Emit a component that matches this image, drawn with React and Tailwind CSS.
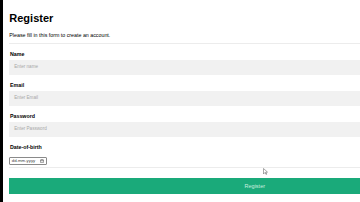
// App.jsx — scaled-down register form
const fields = [
  { label: 'Name', placeholder: 'Enter name' },
  { label: 'Email', placeholder: 'Enter Email' },
  { label: 'Password', placeholder: 'Enter Password' },
];

function Field({ label, placeholder }) {
  return (
    <div className="flex flex-col">
      <div className="h-[6px] text-[5.3px] leading-[6px] font-bold text-black pl-[0.7px]">{label}</div>
      <div className="mt-[3px] h-[14.5px] bg-[#f1f1f1] flex items-center pl-[5px] text-[4.6px] text-[#a8a8a8]">
        {placeholder}
      </div>
      <div className="h-[7.5px]" />
    </div>
  );
}

export default function App() {
  return (
    <div
      className="relative w-[360px] h-[202px] overflow-hidden bg-white flex"
      style={{ fontFamily: '"Liberation Sans", Arial, sans-serif' }}>
      {/* left edge */}
      <div className="w-[3px] shrink-0 bg-black" />

      <div className="shrink-0 w-[491px] ml-[6.3px] flex flex-col">
        <h1 className="mt-[13px] text-[11px] leading-[11px] font-bold text-black">Register</h1>
        <p className="mt-[8px] text-[5.3px] leading-[6px] text-black">Please fill in this form to create an account.</p>
        <div className="mt-[5px] h-px bg-[#ececec]" />

        <div className="mt-[7.3px] flex flex-col">
          {fields.map((f) => (
            <Field key={f.label} {...f} />
          ))}
        </div>

        <div className="h-[6px] text-[5.3px] leading-[6px] font-bold text-black pl-[0.7px]">Date-of-birth</div>
        <div className="mt-[7px] w-[37.5px] h-[7.5px] border-[0.6px] border-[#8a8a8a] rounded-[1px] flex items-center justify-between px-[1.5px] text-[4.3px] text-[#444]">
          <span>dd-mm-yyyy</span>
          <svg width="4" height="4" viewBox="0 0 10 10" fill="none" stroke="#333" strokeWidth="1.1">
            <rect x="1" y="2" width="8" height="7" rx="0.8" />
            <path d="M1 4.5h8M3.5 1v2M6.5 1v2" />
          </svg>
        </div>
        <div className="mt-[2.2px] h-px bg-[#ececec]" />

        <div className="mt-[10px] h-[16px] bg-[#1aaa7a] flex items-center justify-center text-[5.5px] text-[#c9eedf]">
          Register
        </div>
      </div>

      {/* mouse pointer */}
      <svg className="absolute left-[263px] top-[168px]" width="5" height="7" viewBox="0 0 10 14">
        <path d="M1 1v11l3-3 2 4 1.5-.8-2-4H9z" fill="#fff" stroke="#555" strokeWidth="1" />
      </svg>
    </div>
  );
}
